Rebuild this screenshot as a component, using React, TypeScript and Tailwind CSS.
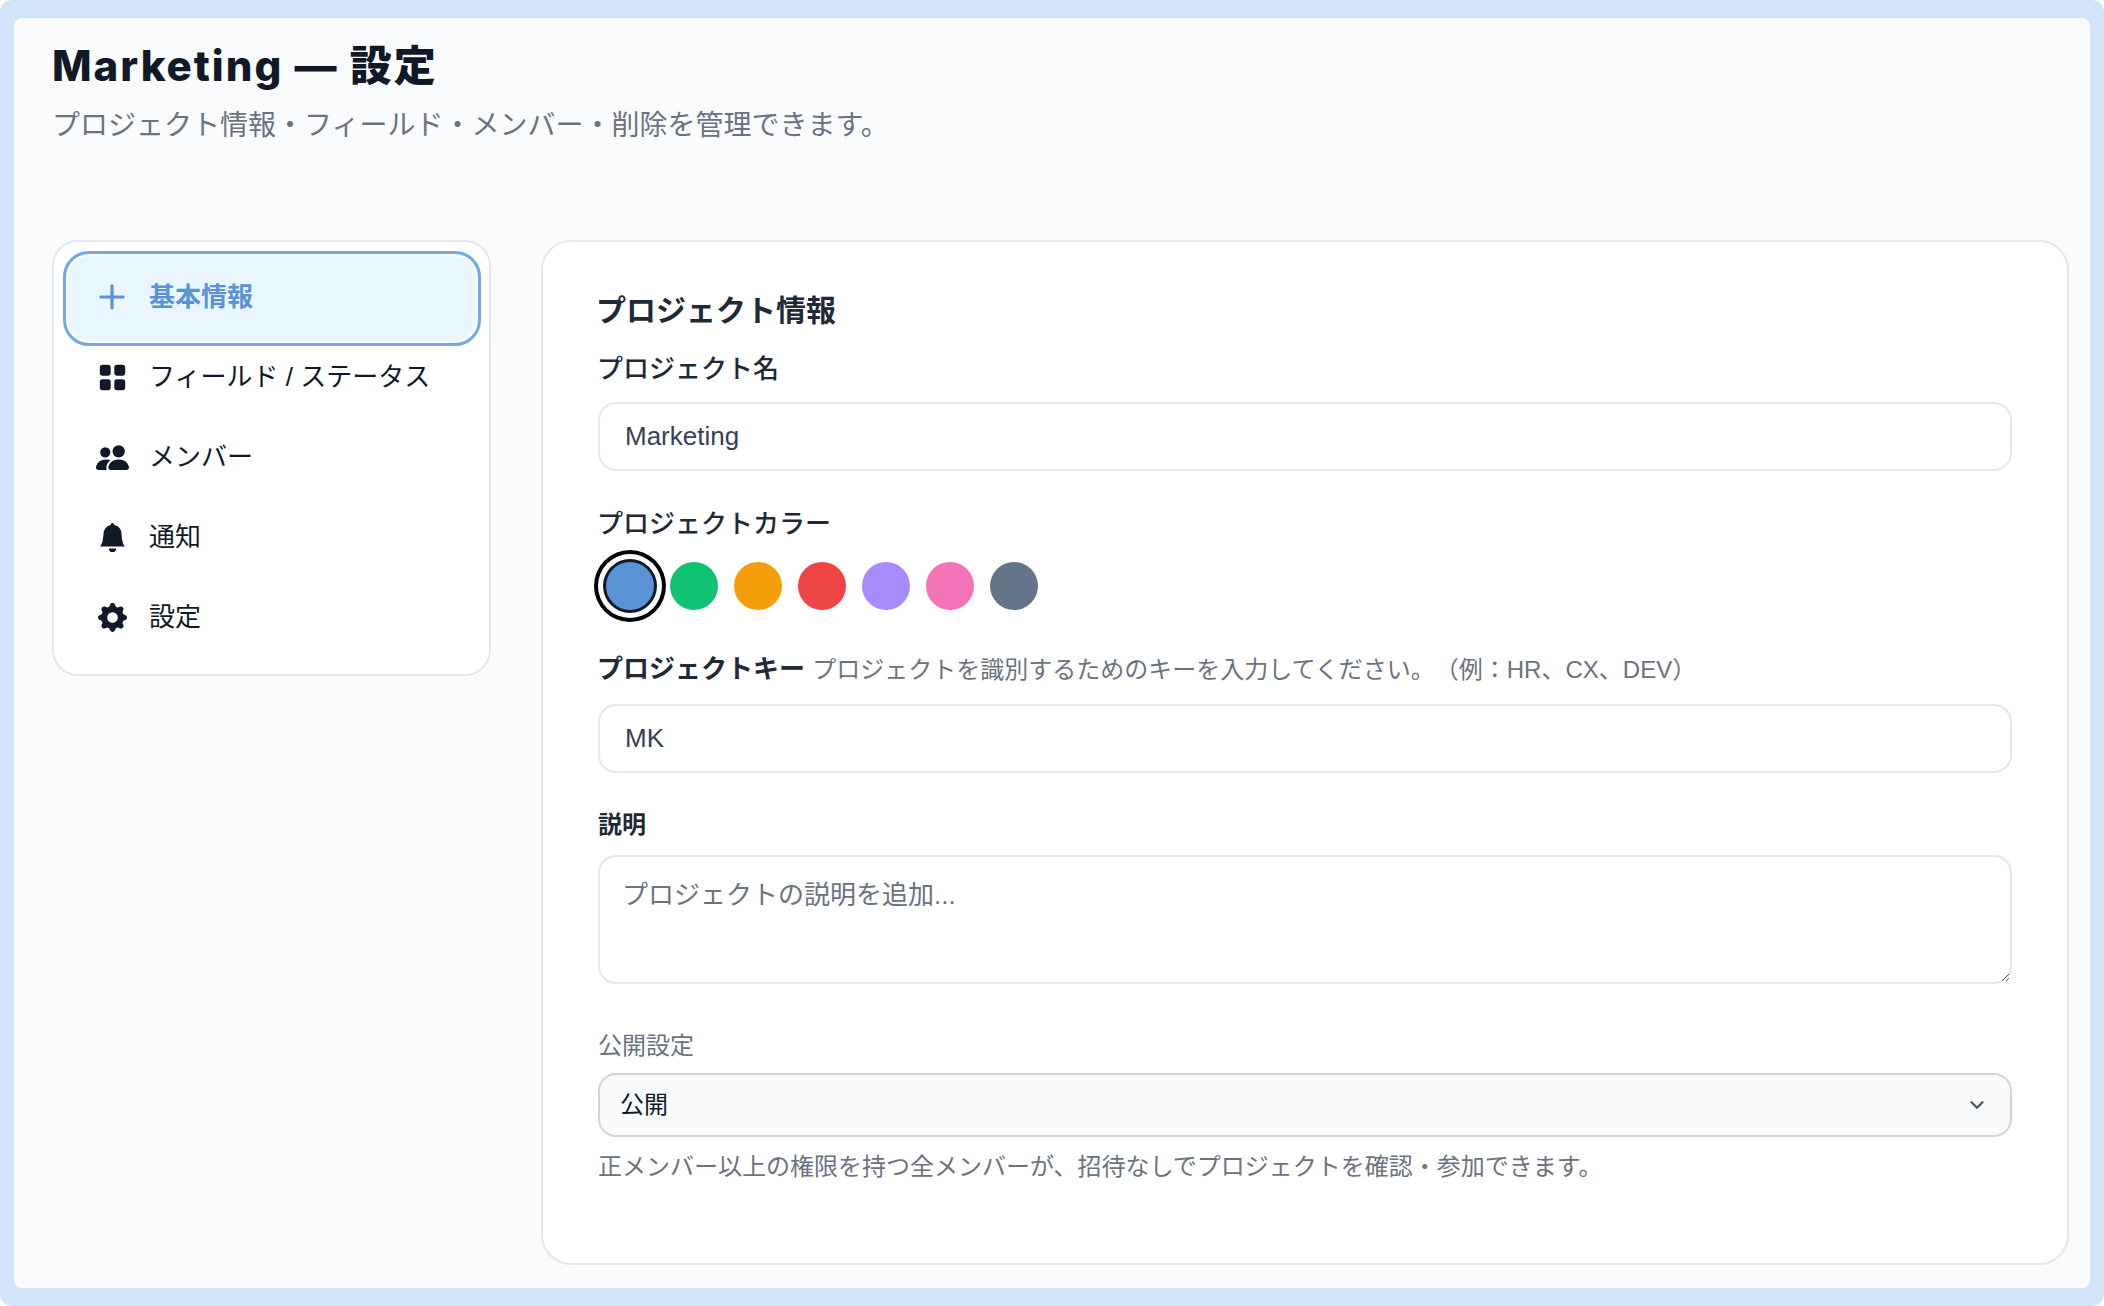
import { BsBellFill, BsGearFill, BsGridFill, BsPeopleFill } from "react-icons/bs";
import { ChevronDown, Plus } from "lucide-react";

const font = "[font-family:'Liberation_Sans','Noto_Sans_CJK_JP',sans-serif] [text-spacing-trim:space-all]";
const swatches = ["bg-[#10c274]", "bg-[#f59e0b]", "bg-[#ef4444]", "bg-[#a78bfa]", "bg-[#f472b6]", "bg-[#64748b]"];
const navItems = [
    { label: "フィールド / ステータス", icon: <BsGridFill size={29} /> },
    { label: "メンバー", icon: <BsPeopleFill size={33} /> },
    { label: "通知", icon: <BsBellFill size={29} /> },
    { label: "設定", icon: <BsGearFill size={29} /> },
];
const inputClass = "block w-full h-[69px] rounded-[18px] border-2 border-[#e5e7eb] bg-white px-[25px] text-[26px] text-[#374151] outline-none";

export default function App() {
    return (
        <div className={`w-[2104px] h-[1306px] bg-white ${font}`}>
            <div className="w-full h-full rounded-xl bg-[#d2e4fa] pt-[18px] pb-[18px] px-[14px]">
                <div className="h-full rounded-lg bg-[#fafbfd] pl-[38px] pr-[21px] pt-[28px]">
                    <h1 className="text-[42px] leading-[40px] font-extrabold tracking-[2px] text-[#111827] [font-family:Inter,'Noto_Sans_CJK_JP',sans-serif]">Marketing — 設定</h1>
                    <p className="mt-[22px] text-[28px] leading-[36px] text-[#6b7280]">プロジェクト情報・フィールド・メンバー・削除を管理できます。</p>
                    <div className="mt-[96px] flex items-start gap-[50px]">
                        <nav className="w-[439px] shrink-0 rounded-[26px] border-2 border-[#e5e7eb] bg-white pl-[9px] pr-[8px] pt-[9px] pb-[9px]">
                            <div className="-mb-px flex h-[95px] items-center gap-[18px] rounded-[26px] border-[3px] border-[#6fa8ec] bg-[#eaf6fd] pb-[3px] pl-[27px] text-[26px] font-semibold text-[#5a92d6] shadow-[inset_0_0_0_2px_white]">
                                <Plus size={38} strokeWidth={2} className="shrink-0" />
                                <span>基本情報</span>
                            </div>
                            {navItems.map((item) => (
                                <div key={item.label} className="mb-4 flex h-16 items-center pl-[23px] text-[26px] text-[#111827]">
                                    <span className="flex w-[52px] shrink-0 justify-center">{item.icon}</span>
                                    <span className="ml-[11px]">{item.label}</span>
                                </div>
                            ))}
                        </nav>
                        <main className="h-[1025px] flex-1 rounded-[30px] border-2 border-[#e5e7eb] bg-white pl-[55px] pr-[55px] pt-[49px]">
                            <h2 className="-ml-[2px] text-[30px] leading-[40px] font-semibold text-[#1f2937]">プロジェクト情報</h2>
                            <label className="-ml-[1px] mt-[20px] block text-[26px] leading-[36px] font-medium text-[#1f2937]">プロジェクト名</label>
                            <input className={`mt-[15px] ${inputClass}`} defaultValue="Marketing" />
                            <label className="-ml-[1px] mt-[35px] block text-[26px] leading-[36px] font-medium text-[#1f2937]">プロジェクトカラー</label>
                            <div className="mt-[20px] flex gap-4 pl-2">
                                <span className="size-12 rounded-full bg-[#5a92d6] shadow-[0_0_0_3px_#111827,0_0_0_8px_white,0_0_0_12px_#000]" />
                                {swatches.map((color) => (
                                    <span key={color} className={`size-12 rounded-full ${color}`} />
                                ))}
                            </div>
                            <div className="-ml-[1px] mt-[41px] text-[26px] leading-[36px] font-semibold text-[#1f2937]">
                                プロジェクトキー <span className="text-[24px] font-normal text-[#6b7280]">プロジェクトを識別するためのキーを入力してください。（例：HR、CX、DEV）</span>
                            </div>
                            <input className={`mt-[16px] ${inputClass}`} defaultValue="MK" />
                            <label className="mt-[34px] block text-[24px] leading-[36px] font-semibold text-[#1f2937]">説明</label>
                            <textarea className="mt-[12px] block h-[129px] w-full rounded-[18px] border-2 border-[#e5e7eb] bg-white px-[22px] pt-[20px] pb-[12px] text-[26px] leading-[36px] text-[#374151] outline-none placeholder:text-[#6b7280]" placeholder="プロジェクトの説明を追加..." />
                            <label className="mt-[44px] block text-[24px] leading-[36px] text-[#6b7280]">公開設定</label>
                            <div className="relative mt-[9px]">
                                <select className="block h-[64px] w-full appearance-none rounded-[18px] border-2 border-[#d1d5db] bg-[#f9fafc] pl-[20px] text-[24px] text-[#111827] outline-none" defaultValue="public">
                                    <option value="public">公開</option>
                                </select>
                                <ChevronDown size={22} strokeWidth={2.5} className="absolute right-[24px] top-[21px] text-[#4b5563]" />
                            </div>
                            <p className="mt-[12px] text-[24px] leading-[36px] text-[#6b7280]">正メンバー以上の権限を持つ全メンバーが、招待なしでプロジェクトを確認・参加できます。</p>
                        </main>
                    </div>
                </div>
            </div>
        </div>
    );
}
